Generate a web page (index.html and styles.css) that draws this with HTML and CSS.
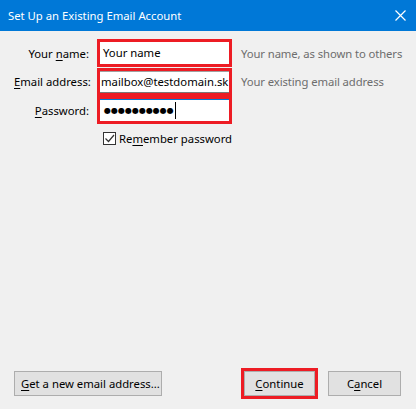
FILE: index.html
```html
<!DOCTYPE html>
<html>
<head>
<meta charset="utf-8">
<link rel="stylesheet" href="styles.css">
</head>
<body>
<div class="dialog">
  <div class="titlebar">
    <span class="title">Set Up an Existing Email Account</span>
    <svg class="close" width="11" height="11" viewBox="0 0 11 11"><path d="M0.5 0.5 L10.5 10.5 M10.5 0.5 L0.5 10.5" stroke="#fff" stroke-width="1.2" fill="none"/></svg>
  </div>
  <div class="content">
    <div class="form">
      <div class="label">Your <u>n</u>ame:</div>
      <div class="box"><div class="input first">Your name</div></div>
      <div class="hint">Your name, as shown to others</div>

      <div class="label"><u>E</u>mail address:</div>
      <div class="box"><div class="input email">mailbox@testdomain.sk</div></div>
      <div class="hint">Your existing email address</div>

      <div class="label"><u>P</u>assword:</div>
      <div class="box"><div class="input focused"><span class="dots">●●●●●●●●●●</span><span class="caret"></span></div></div>
      <div class="hint"></div>

      <div></div>
      <label class="check"><span class="cb"><svg width="11" height="11" viewBox="0 0 11 11"><path d="M1.5 5.5 L4.5 8.5 L10 2" stroke="#333" stroke-width="1.2" fill="none"/></svg></span><span class="cbtext">Re<u>m</u>ember password</span></label>
      <div></div>
    </div>
    <div class="footer">
      <button class="btn get"><u>G</u>et a new email address...</button>
      <div class="right">
        <div class="redbtn"><button class="btn cont"><u>C</u>ontinue</button></div>
        <button class="btn cancel">C<u>a</u>ncel</button>
      </div>
    </div>
  </div>
</div>
</body>
</html>
```

FILE: styles.css
```css
* { box-sizing: border-box; }
html, body { margin: 0; padding: 0; }
body {
  width: 416px;
  height: 409px;
  background: #f0f0f0;
  font-family: "Noto Sans", "Open Sans", sans-serif;
  font-size: 11.3px;
  color: #000;
  overflow: hidden;
}
.dialog { display: flex; flex-direction: column; height: 409px; }
.titlebar {
  height: 31px;
  background: #0078d7;
  color: #fff;
  display: flex;
  align-items: center;
  justify-content: space-between;
  padding: 0 10px 1px 8px;
  flex: none;
}
.title { font-size: 11.3px; }
.close { display: block; }
.content {
  flex: 1;
  display: flex;
  flex-direction: column;
  justify-content: space-between;
  padding: 8px 15px 10px 14px;
}
.form {
  display: grid;
  grid-template-columns: 75px 135px auto;
  column-gap: 8px;
  align-items: center;
}
.form .label { text-align: right; white-space: nowrap; }
.form .hint { color: #6d6d6d; padding-left: 1px; white-space: nowrap; letter-spacing: -0.1px; }
.box {
  border: 3px solid #ed1c24;
  height: 28px;
  margin-bottom: 0.5px;
}
.input {
  height: 22px;
  background: #fff;
  padding: 0 3px;
  line-height: 22px;
  white-space: nowrap;
  overflow: hidden;
}
.input.email { padding: 0 0 0 1px; border-top: 1px solid #a0a0a0; line-height: 20px; border-bottom: 1px solid #7a7a7a; }
.input.focused { border-top: 1px solid #0078d7; display: flex; align-items: center; padding-left: 4px; }
.dots { font-size: 8px; letter-spacing: 0; font-family: "DejaVu Sans", sans-serif; }
.caret { width: 1px; height: 17px; background: #000; margin-left: 1px; }
.check {
  display: flex;
  align-items: center;
  gap: 3px;
  padding-left: 6px;
  height: 27px;
  white-space: nowrap;
}
.cb {
  width: 13px; height: 13px;
  border: 1px solid #333;
  background: #fff;
  display: flex; align-items: center; justify-content: center;
}
.cb svg { display: block; }
.footer {
  display: flex;
  justify-content: space-between;
  align-items: center;
}
.right { display: flex; align-items: center; gap: 10px; }
.btn {
  font-family: inherit;
  font-size: 11.3px;
  color: #000;
  background: #e1e1e1;
  border: 1px solid #adadad;
  height: 25px;
  padding: 0 6px;
  margin: 0;
  white-space: nowrap;
}
.get { width: 148px; }
.redbtn { border: 3px solid #ed1c24; }
.cont { width: 71px; display: block; }
.cancel { width: 73px; }
u { text-decoration-thickness: 1px; text-underline-offset: 2px; }
```
